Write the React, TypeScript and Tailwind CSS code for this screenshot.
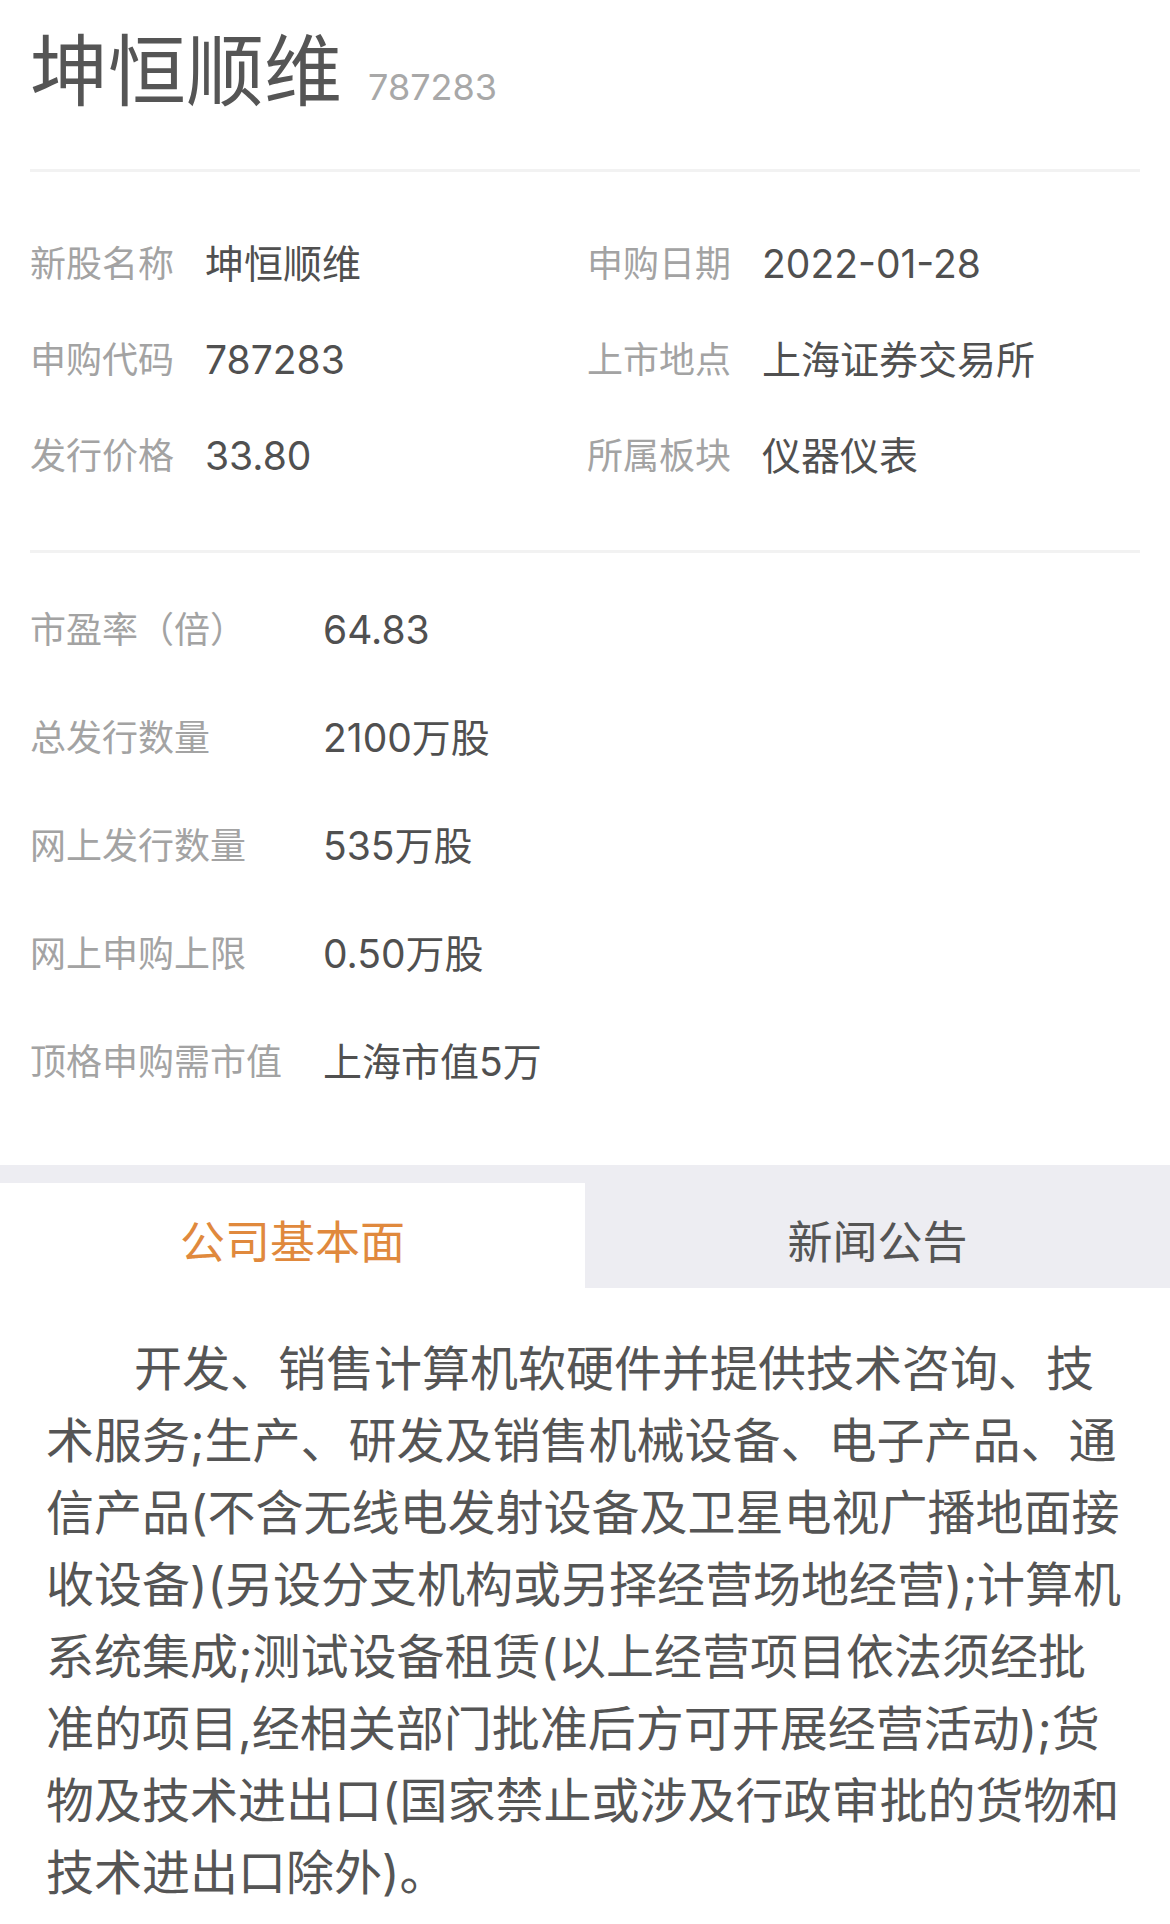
import React from "react";

const font = { fontFamily: '"Inter", "Noto Sans CJK SC", sans-serif' };

const rows1: [string, string, string, string][] = [
  ["新股名称", "坤恒顺维", "申购日期", "2022-01-28"],
  ["申购代码", "787283", "上市地点", "上海证券交易所"],
  ["发行价格", "33.80", "所属板块", "仪器仪表"],
];

const rows2: [string, string][] = [
  ["市盈率（倍）", "64.83"],
  ["总发行数量", "2100万股"],
  ["网上发行数量", "535万股"],
  ["网上申购上限", "0.50万股"],
  ["顶格申购需市值", "上海市值5万"],
];

const lines = [
  "开发、销售计算机软硬件并提供技术咨询、技",
  "术服务;生产、研发及销售机械设备、电子产品、通",
  "信产品(不含无线电发射设备及卫星电视广播地面接",
  "收设备)(另设分支机构或另择经营场地经营);计算机",
  "系统集成;测试设备租赁(以上经营项目依法须经批",
  "准的项目,经相关部门批准后方可开展经营活动);货",
  "物及技术进出口(国家禁止或涉及行政审批的货物和",
  "技术进出口除外)。",
];

export default function App() {
  return (
    <div className="w-[1170px] min-h-[1924px] bg-white" style={font}>
      {/* Header */}
      <div className="px-[30px] pt-[33px] pb-[58px] flex items-baseline">
        <span className="text-[78px] leading-[78px] text-[#555555]">坤恒顺维</span>
        <span className="ml-[26px] text-[36px] leading-none text-[#a8a8a8]">787283</span>
      </div>
      <div className="mx-[30px] h-[3px] bg-[#f2f2f2]" />

      {/* Section 1 */}
      <div className="px-[30px] pt-[44px] pb-[46px]">
        {rows1.map(([l1, v1, l2, v2]) => (
          <div key={l1} className="grid grid-cols-[557px_1fr] h-[96px] items-center">
            <div className="flex items-center">
              <span className="w-[175px] text-[36px] text-[#a3a3a3]">{l1}</span>
              <span className="text-[39px] text-[#505050]">{v1}</span>
            </div>
            <div className="flex items-center">
              <span className="w-[175px] text-[36px] text-[#a3a3a3]">{l2}</span>
              <span className="text-[39px] text-[#505050]">{v2}</span>
            </div>
          </div>
        ))}
      </div>
      <div className="mx-[30px] h-[3px] bg-[#f2f2f2]" />

      {/* Section 2 */}
      <div className="px-[30px] pt-[23px] pb-[49px]">
        {rows2.map(([l, v]) => (
          <div key={l} className="flex items-center h-[108px]">
            <span className="w-[293px] text-[36px] text-[#a3a3a3]">{l}</span>
            <span className="text-[39px] text-[#505050]">{v}</span>
          </div>
        ))}
      </div>

      {/* Tabs */}
      <div className="bg-[#ededf2] pt-[18px]">
        <div className="grid grid-cols-2 h-[105px]">
          <div className="bg-white flex items-center justify-center pt-[14px] text-[45px] text-[#e0893d]">
            公司基本面
          </div>
          <div className="bg-[#ededf2] flex items-center justify-center pt-[14px] text-[45px] text-[#555555]">
            新闻公告
          </div>
        </div>
      </div>

      {/* Paragraph */}
      <div className="px-[46px] pt-[45px] pb-[15px]">
        <p className="text-[48px] leading-[72px] text-[#555555] whitespace-nowrap indent-[88px]">
          {lines.map((ln, i) => (
            <React.Fragment key={i}>
              {ln}
              {i < lines.length - 1 && <br />}
            </React.Fragment>
          ))}
        </p>
      </div>
    </div>
  );
}
